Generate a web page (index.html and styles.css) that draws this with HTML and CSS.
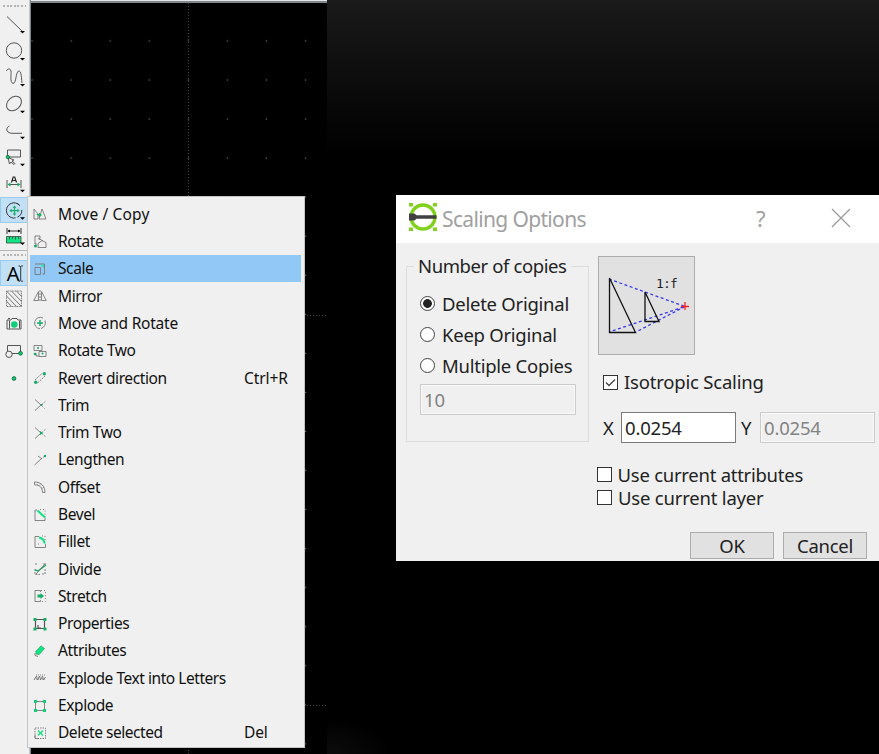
FILE: index.html
```
<!DOCTYPE html>
<html lang="en">
<head>
<meta charset="utf-8">
<title>CAD – Scaling Options</title>
<link rel="stylesheet" href="styles.css">
</head>
<body>
<main class="screen">
  <nav class="toolbar">
    <div class="grip"></div>
    <div class="tool"><svg viewBox="0 11 28 26.5"><path class="ln" d="M7 16.500L22 31"/><path class="arr" d="M20 31h5l-2.500 2.500z"/></svg></div>
    <div class="tool"><svg viewBox="0 37.500 28 26.500"><circle class="ln" cx="14" cy="50" r="7.700"/><path class="arr" d="M20 57.500h5L22.500 60z"/></svg></div>
    <div class="tool"><svg viewBox="0 64 28 26.500"><path class="ln" d="M6.500 71C7 68.500 10.500 68 11 71C11.500 75 9.500 82 13 83.500C16.500 83 15.500 73 18.500 71C21.500 70 21.500 79 22 83"/><path class="arr" d="M20 84h5l-2.500 2.500z"/></svg></div>
    <div class="tool"><svg viewBox="0 90.500 28 26.500"><ellipse class="ln" cx="14" cy="103" rx="8.300" ry="6.300" transform="rotate(-42 14 103)"/><path class="arr" d="M20 110.300h5l-2.500 2.500z"/></svg></div>
    <div class="tool"><svg viewBox="0 117 28 26.500"><path class="ln" d="M9.500 126C6.500 127 5.500 131 9 132.500Q10 133.300 12 133.300H22"/><path class="arr" d="M20 136.800h5l-2.500 2.500z"/></svg></div>
    <div class="tool"><svg viewBox="0 143.500 28 26.500"><path class="ln" d="M7.500 156V149.500H20.500V156.500H8"/><path class="ln" d="M8 157l1.500 6.500l1.500-2l3 2.500l1-1l-3-2.500l2-1z"/><circle class="gd" cx="7.800" cy="156.500" r="1.700"/><path class="arr" d="M20 163.300h5l-2.500 2.500z"/></svg></div>
    <div class="tool"><svg viewBox="0 170 28 26.500"><path class="ln" d="M7 180v8M21 180v8M8 184.500h12"/><path class="gr" d="M7.500 184.500l3-2v4zM20.500 184.500l-3-2v4z"/><path class="dk" d="M11.500 182.500L13.200 177h1.500l1.800 5.500M12 180.500h4"/><path class="arr" d="M20 189.800h5l-2.500 2.500z"/></svg></div>
    <div class="tool on"><svg viewBox="0 196.500 28 26.500"><path class="dk2" d="M19 204.200A7.600 7.600 0 1 0 15.500 217.400M17 202.700l3 2.500M21.800 209.500A7.600 7.600 0 0 1 17.500 216.700"/><path class="gr" d="M14.500 205l1.800 2.500h-1.200v2h2.200v-1.300l2.400 1.900l-2.400 1.900v-1.300h-2.200v2.200h1.200L14.500 215.200l-1.800-2.300h1.200v-2.200h-2.200V212L9.300 210.100l2.400-1.900v1.300h2.200v-2h-1.200z"/><path class="arr" d="M20 216.800h5l-2.500 2.500z"/></svg></div>
    <div class="tool"><svg viewBox="0 223 28 26.500"><path class="dk2" d="M7 228v6M21 228v6M8 231h12"/><path class="arr" d="M7.500 231l2.500-1.500v3zM20.500 231l-2.500-1.500v3z"/><path fill="#12e383" stroke="#30463c" stroke-width=".8" d="M6.500 236.500H21V243H6.500z"/><path stroke="#233" stroke-width=".8" d="M9.500 237v2.500M12.500 237v2M15.500 237v2.500M18.500 237v2"/><path class="arr" d="M20 242.500h5L22.500 245z"/></svg></div>
    <div class="grip lower"></div>
    <div class="tool on"><svg viewBox="0 259.500 28 26.500"><text x="6.800" y="280" class="big-a">A</text><path class="dk2" d="M18.500 265.500h1.500l.7.700.7-.7H23M20.700 266v14M18.500 280.700h1.500l.7-.7.7.7H23"/></svg></div>
    <div class="tool"><svg viewBox="0 286 28 26.500"><path class="thin" stroke-dasharray="1 .7" d="M6.500 291H21.500V306.500H6.500z"/><path class="thin" d="M6.500 301l5 5.500M6.500 296l10 10.500M6.500 291l15 15.500M11.500 291l10 10.500M16.500 291l5 5.500"/></svg></div>
    <div class="tool"><svg viewBox="0 312.500 28 26.500"><path class="ln" d="M7 319.500H11L12 318h5l1 1.500h3v9H7zM8 318h2M9.500 320v8M19.500 320v8"/><circle class="gr bright" cx="14.300" cy="324" r="3.300"/></svg></div>
    <div class="tool"><svg viewBox="0 339 28 26.500"><path class="ln" d="M7.500 351V345.500H20.500V352M12 353.500H20"/><circle class="ln" cx="9" cy="354.300" r="3.200"/><circle class="gd" cx="20.500" cy="353.300" r="1.900"/></svg></div>
    <div class="tool"><svg viewBox="0 365.500 28 26.500"><circle class="gd" cx="14" cy="378" r="1.900"/></svg></div>
  </nav>
  <section class="drawing">
    <svg width="296" height="752" viewBox="31 2 296 752">
      <defs><pattern id="grid" x="31.500" y="2.500" width="39.050" height="39.050" patternUnits="userSpaceOnUse"><path d="M0 38.500h1.200" stroke="#777" stroke-width="1.200"/></pattern></defs>
      <rect x="31" y="3" width="276" height="751" fill="url(#grid)"/>
      <path d="M188.500 3V754M304 315.500H326M304 705.500H326" stroke="#444" stroke-dasharray="1 2"/>
    </svg>
  </section>
  <section class="backdrop"></section>

  <ul class="menu">
    <li><svg viewBox="0 0 14 14"><path class="ic" d="M1 12V2l4 5M1 12h4M9 2l4 10H6zM5 12V7"/><path class="gr" d="M3 7h3V5.500L9 8l-3 2.500V9z"/></svg><span class="wide">Move / Copy</span></li>
    <li><svg viewBox="0 0 14 14"><path class="ic" d="M2 9V1h5v2l-1 2M5 12.500h8V7.500L9 5.500 5 8.500zM2 9h2M5 3l5 3"/><circle class="gr" cx="2.500" cy="11" r="1.500"/></svg><span>Rotate</span></li>
    <li class="sel"><svg viewBox="0 0 14 14"><path class="ic" d="M2 2H11.500V12H9.500M2 12.500V5.500H7.500V12.500z"/><path d="M7.500 2.500h3.500v3.500z" fill="#27dfa0"/></svg><span>Scale</span></li>
    <li><svg viewBox="0 0 14 14"><path class="ic" d="M5.500 2.500L.8 11.500H5.500zM8.500 2.500l4.700 9H8.500z"/><path class="ic" stroke-dasharray="2 1" d="M7 1v12"/></svg><span>Mirror</span></li>
    <li><svg viewBox="0 0 14 14"><path class="ic" d="M10 2A5.700 5.700 0 1 0 7 12.700M12 4.500A6 6 0 0 1 8 12.500"/><path class="gl" d="M7 4v6M4 7h6"/></svg><span class="mid">Move and Rotate</span></li>
    <li><svg viewBox="0 0 14 14"><path class="ic" d="M1 1.500H9V6.500H1zM6 7.500h7v5H6zM3 9v3h3"/><circle class="gr" cx="5" cy="4" r="1"/><circle class="gr" cx="2" cy="10" r="1.300"/><circle class="gr" cx="9.500" cy="9.500" r="1"/></svg><span>Rotate Two</span></li>
    <li><svg viewBox="0 0 14 14"><path class="ic" stroke-dasharray="2 1" d="M2 9L9 2.500M4.500 12L12 5"/><circle class="gr" cx="11.300" cy="2.700" r="1.700"/><circle class="gr" cx="2.700" cy="11.300" r="1.700"/></svg><span>Revert direction</span><kbd>Ctrl+R</kbd></li>
    <li><svg viewBox="0 0 14 14"><path class="ic" d="M2 1.500L8 7l-6 5.500M8 7l2-1"/><path class="ic" stroke-dasharray="1 1" d="M8 7l5-4M8 7l4 4"/><circle class="gr" cx="8.500" cy="7" r=".9"/></svg><span>Trim</span></li>
    <li><svg viewBox="0 0 14 14"><path class="ic" d="M2 1.500L8 7l-6 5.500"/><path class="ic" stroke-dasharray="1 1" d="M8 7l5-4M8 7l5 4"/><path class="gr" d="M7 5L10.500 7 7 9z"/></svg><span>Trim Two</span></li>
    <li><svg viewBox="0 0 14 14"><path class="ic" d="M1.500 12L8 6M5 3l4 3"/><path class="ic" stroke-dasharray="1.500 1" d="M8 6l4-3"/><circle class="gr" cx="12" cy="3" r="1.200"/></svg><span>Lengthen</span></li>
    <li><svg viewBox="0 0 14 14"><path class="ic" d="M1.500 2C8 2 12 6 12 12.500H9.500C9.500 8 7 4.800 1.500 4.800z"/><path class="ic" stroke-dasharray="1 1" d="M5 2l-1 3M8 3.500L6.500 6M11 7L8.500 9"/></svg><span>Offset</span></li>
    <li><svg viewBox="0 0 14 14"><path class="ic" d="M4 2H2v10.500h10V10"/><path class="ic" stroke-dasharray="1 2" d="M7 1.500h5v8"/><path class="br" d="M4.500 2.500L12 9.500"/></svg><span>Bevel</span></li>
    <li><svg viewBox="0 0 14 14"><path class="ic" d="M6 1.500H2v11h10.500V9M5 9h1"/><path class="ic" stroke-dasharray="1 2" d="M9 1h3v5"/><path class="br" d="M6 2.500q5 1 5.700 6"/></svg><span>Fillet</span></li>
    <li><svg viewBox="0 0 14 14"><path class="ic" stroke-dasharray="2 1" d="M2 2h3M9 12h3V7M2 7v5.500h5"/><path class="gl" d="M2 8l3 1 8-6"/><path class="ic" d="M3 12l9-10M10 2h3"/></svg><span>Divide</span></li>
    <li><svg viewBox="0 0 14 14"><path class="ic" d="M7.500 3V1.500H2v11h5.500V11"/><path class="ic" stroke-dasharray="1 2" d="M8 1.500h4.500v11H8"/><path class="gr" d="M4.500 5.500h3V4L11 7 7.500 10V8.500h-3z"/></svg><span>Stretch</span></li>
    <li><svg viewBox="0 0 14 14"><path class="prop" d="M2.500 2.500h9v9h-9zM5 8v3h3"/><path class="gr" d="M.5 1h3v3h-3zM10.500 1h3v3h-3zM.5 10.500h3v3h-3zM10.500 10.500h3v3h-3z"/></svg><span>Properties</span></li>
    <li><svg viewBox="0 0 14 14"><path fill="#12e383" stroke="#24995f" stroke-width=".6" d="M2.700 7.500L8 1.800 11.500 4.500 6.300 10.500l-3-.3z"/><path class="ic" d="M2 9v2.500l3 1"/></svg><span>Attributes</span></li>
    <li><svg viewBox="0 0 14 14"><path class="ic" d="M1 9l2.500-4 1 4 2-4 1 4 2-4 1 4 2-3"/><path class="ic" stroke-dasharray="1 1" d="M1 8h12M3 4h9"/></svg><span class="tight">Explode Text into Letters</span></li>
    <li><svg viewBox="0 0 14 14"><path class="ic" d="M2.500 2.500h9v9h-9z"/><path class="gr bright" d="M1 1h3v3H1zM10 1h3v3h-3zM1 10h3v3H1zM10 10h3v3h-3z"/></svg><span>Explode</span></li>
    <li><svg viewBox="0 0 14 14"><path class="ic" stroke-dasharray="1.500 1" d="M2 2h10.500v10.500H2z"/><path stroke="#12e383" stroke-width="1.300" d="M5 4.500l5 5M10 4.500l-5 5"/><path class="ic" d="M2 9v3.500h4"/></svg><span class="tight">Delete selected</span><kbd>Del</kbd></li>
  </ul>

  <section class="dialog">
    <header>
      <svg class="logo" viewBox="0 0 30 30"><circle cx="15" cy="15" r="12" fill="none" stroke="#7fd11c" stroke-width="3.300"/><path fill="#7fd11c" d="M1 1h4v3.500H1zM25 1h4v3.500h-4zM1 25.500h4v3.500H1zM25 25.500h4v3.500h-4z"/><path fill="#404040" d="M1 11.500h5.500l2 1.700H28.500v3.500H8.500l-2 1.800H1z"/></svg>
      <h1>Scaling Options</h1>
      <span class="help">?</span>
      <svg class="close" viewBox="0 0 20 20"><path d="M1 1l18 18M19 1L1 19"/></svg>
    </header>
    <div class="content">
      <fieldset>
        <legend>Number of copies</legend>
        <label><i class="radio checked"></i><span>Delete Original</span></label>
        <label><i class="radio"></i><span>Keep Original</span></label>
        <label><i class="radio"></i><span>Multiple Copies</span></label>
        <div class="field off count">10</div>
      </fieldset>
      <div class="options">
        <div class="preview">
          <svg viewBox="598 256 97 99"><g fill="none"><path stroke="#3838f0" stroke-width="1.300" stroke-dasharray="3 2.500" d="M609 279L685 306.500L609 332M685 306.500L636 332"/><path stroke="#111" stroke-width="1.300" d="M609.500 278V332.500H635.500zM645 292V321.500H659z"/><path stroke="#f22" stroke-width="1.300" d="M681 306.500h8M685 302v8"/></g><text x="656" y="288">1:f</text></svg>
        </div>
        <label class="iso"><i class="box"><svg viewBox="0 0 13 13"><path d="M2 6.500l3 3L11 3.500"/></svg></i><span>Isotropic Scaling</span></label>
        <div class="factors"><b>X</b><div class="field">0.0254</div><b class="y">Y</b><div class="field off">0.0254</div></div>
        <label class="attr"><i class="box"></i><span>Use current attributes</span></label>
        <label class="attr layer"><i class="box"></i><span>Use current layer</span></label>
      </div>
    </div>
    <footer><button>OK</button><button>Cancel</button></footer>
  </section>
</main>
</body>
</html>
```
FILE: styles.css
```
* { box-sizing: border-box; }
body { margin: 0; background: #000; overflow: hidden; }
.screen { position: relative; display: flex; width: 879px; height: 754px; background: #000; }

.toolbar { width: 31px; height: 754px; background: #f0f0f0; border-right: 1px solid #7d858a; box-shadow: inset -1px 0 #c3c7ca; }
.toolbar svg { display: block; width: 28px; height: 26.5px; }
.grip { height: 11px; padding: 5px 0 0 3px; }
.grip::after { content: ""; display: block; width: 23px; height: 2px; background: repeating-linear-gradient(90deg, #b4b4b4 0 2px, transparent 2px 3.6px); }
.grip.lower { height: 10px; padding-top: 3px; border-top: 1px solid #b5b5b5; }
.tool { height: 26.5px; }
.tool.on { width: 28px; background: #c1dff5; box-shadow: inset 0 0 0 1px #9acbf1; }
.ln, .dk, .dk2, .thin { fill: none; stroke: #555; stroke-width: 1; }
.dk { stroke: #222; stroke-width: 1.2; }
.dk2 { stroke: #333; }
.thin { stroke-width: .8; }
.arr { fill: #000; }
.gr { fill: #18ad68; }
.gr.bright { fill: #10cf78; }
.gd { fill: #10c870; stroke: #075c34; stroke-width: .7; }
.big-a { font: 20px "Noto Sans", sans-serif; fill: #000; }

.drawing { width: 296px; border-top: 1px solid #e4e6e7; background: #000; overflow: hidden; }
.drawing::before { content: ""; display: block; height: 2px; margin-bottom: -1px; background: #7f878b; }
.drawing svg { display: block; }
.backdrop { flex: 1; background: radial-gradient(ellipse 65px 36px at 0 100%, #0c0c0c, transparent), linear-gradient(#1a1a1a, #0d0d0d 75px, #000 155px); }

.menu { position: absolute; left: 27px; top: 196px; width: 278px; height: 552px; margin: 0; padding: 3.6px 3px 0 2px; list-style: none; background: #f0f0f0; border: 1px solid #c4c4c4; font: 15.5px/27px "Noto Sans", sans-serif; color: #111; }
.menu li { display: flex; align-items: center; height: 27.3px; padding-left: 3px; white-space: nowrap; }
.menu li svg { width: 14px; height: 14px; }
.menu li span { width: 186px; margin-left: 11px; letter-spacing: -.4px; }
.menu li .wide { letter-spacing: .15px; }
.menu li .mid { letter-spacing: -.22px; }
.menu li .tight { letter-spacing: -.45px; }
.menu kbd { font: inherit; letter-spacing: -.1px; }
.menu .sel { background: #91c8f6; }
.ic { fill: none; stroke: #777; stroke-width: .9; }
.prop { fill: none; stroke: #555; stroke-width: 1.2; }
.gl { fill: none; stroke: #18ad68; stroke-width: 1.5; }
.br { fill: none; stroke: #12e383; stroke-width: 2; }

.dialog { position: absolute; left: 396px; top: 195px; width: 483px; height: 366px; background: #f0f0f0; font: 18.5px/24px "Noto Sans", sans-serif; color: #222; overflow: hidden; }
.dialog header { display: flex; align-items: center; height: 48px; padding-left: 12px; background: #fff; color: #a0a0a0; }
.logo { width: 30px; height: 30px; margin-top: -4px; }
.dialog h1 { width: 314px; margin: -1px 0 0 4px; font-size: 21px; font-weight: 400; letter-spacing: -.65px; }
.help { width: 75px; margin-top: -3px; font-size: 22px; }
.close { width: 20px; height: 20px; margin-top: -3px; fill: none; stroke: #999; stroke-width: 1.2; }
.content { display: flex; height: 289px; padding-left: 10px; }
fieldset { width: 183px; height: 187px; margin: 12px 0 0; padding: 11px 0 0 13px; border: 1px solid #dcdcdc; }
legend { height: 22px; margin-left: -6px; padding: 0 4px; line-height: 22px; white-space: nowrap; letter-spacing: -.4px; }
label { display: flex; align-items: center; height: 31px; white-space: nowrap; letter-spacing: -.3px; }
.radio { width: 15px; height: 15px; margin-right: 7px; border: 1px solid #444; border-radius: 50%; background: #fff; }
.radio.checked { background: radial-gradient(circle, #222 0 4px, #fff 4.7px); }
fieldset label { letter-spacing: -.25px; }
.field { flex: none; height: 31px; width: 115px; padding: 0 3px; line-height: 29px; background: #fff; border: 1px solid #7a7a7a; letter-spacing: -.2px; }
.field.off { background: #f0f0f0; border-color: #ccc; color: #838383; box-shadow: inset 0 0 0 1px #f9f9f9; }
.field.count { width: 156px; margin-top: 3px; line-height: 30px; }
.options { flex: 1; padding: 13px 0 0 9px; }
.preview { width: 97px; height: 99px; background: #e1e1e1; border: 1px solid #adadad; }
.preview svg { display: block; width: 97px; height: 99px; margin: -1px; }
.preview text { font: 13px "DejaVu Sans Mono", monospace; fill: #222; letter-spacing: -.8px; }
.box { width: 15px; height: 15px; border: 1px solid #333; background: #fff; }
.box svg { display: block; width: 13px; height: 13px; fill: none; stroke: #444; stroke-width: 1.3; }
.iso { height: 24px; margin: 15px 0 0 5px; letter-spacing: -.2px; }
.box + span { margin-left: 6px; }
.factors { display: flex; align-items: center; margin: 18px 0 0 5px; }
.factors b { width: 18px; font-weight: 400; }
.factors .y { width: 19px; margin-left: 5px; }
.attr { height: 23px; width: 206px; margin-top: 20px; margin-left: -1px; overflow: hidden; letter-spacing: -.26px; }
.attr.layer { margin-top: 0; letter-spacing: -.2px; }
footer { display: flex; justify-content: flex-end; gap: 9px; padding-right: 12px; }
button { width: 84px; height: 27px; padding: 0; border: 1px solid #adadad; background: #e1e1e1; color: #222; font: inherit; line-height: 24px; letter-spacing: -.3px; }
```
